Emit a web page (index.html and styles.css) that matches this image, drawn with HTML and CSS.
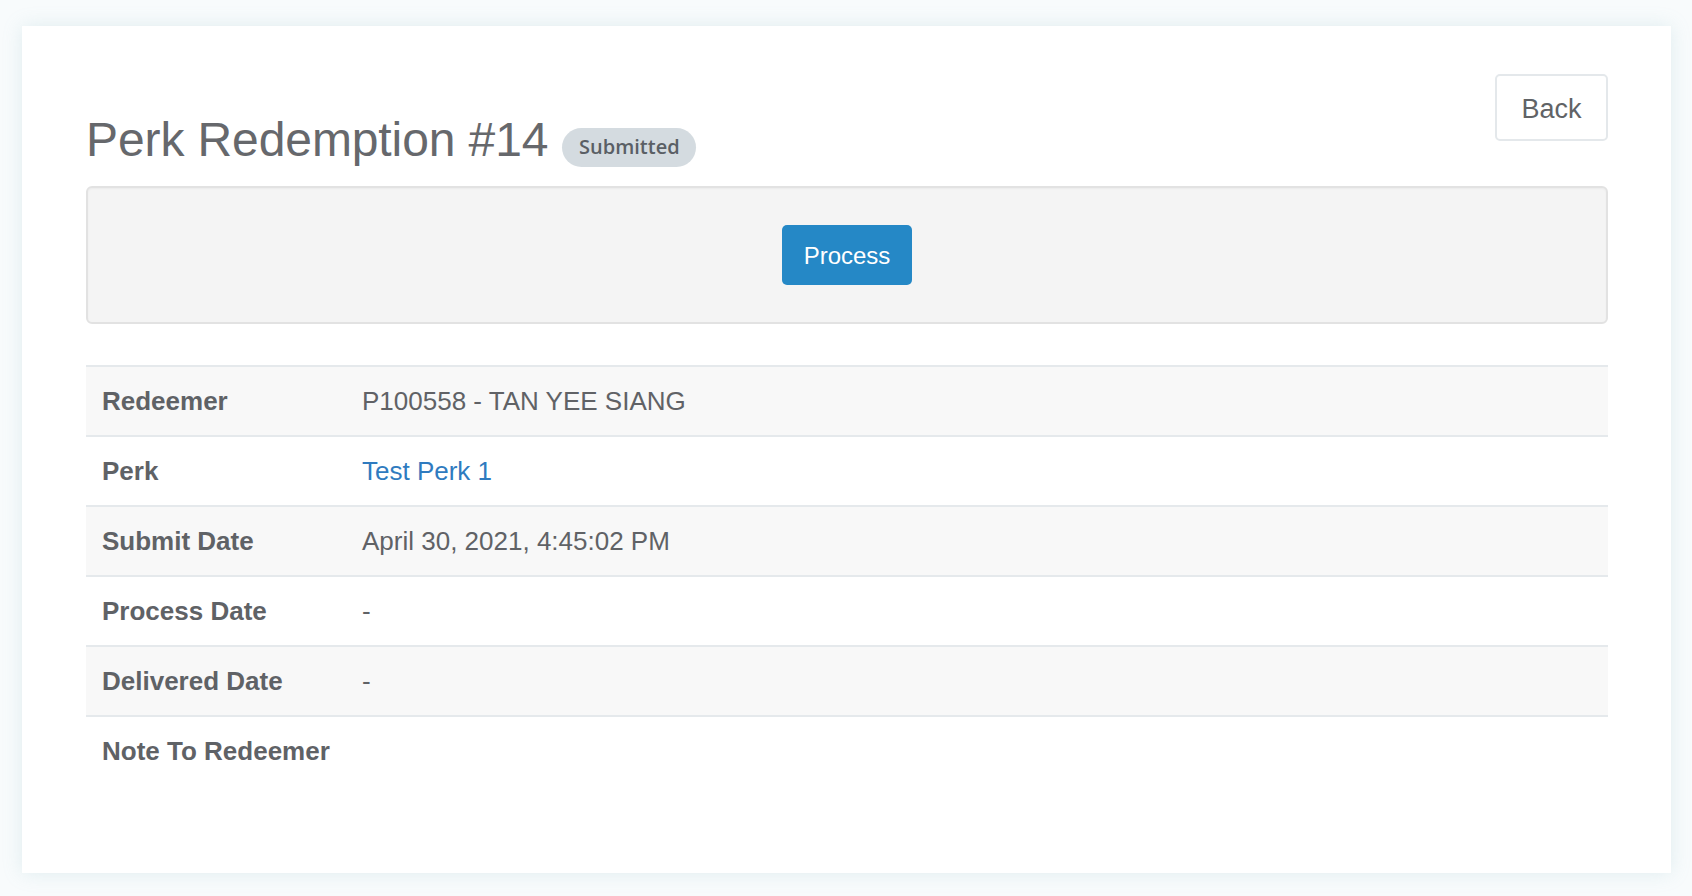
FILE: index.html
```html
<!DOCTYPE html>
<html lang="en">
<head>
<meta charset="utf-8">
<title>Perk Redemption #14</title>
<link rel="stylesheet" href="styles.css">
</head>
<body>
<main class="card">
  <header class="page-header">
    <h1 class="title">
      <span class="title-text">Perk Redemption #14</span>
      <span class="badge">Submitted</span>
    </h1>
    <button class="btn btn-default" type="button">Back</button>
  </header>

  <section class="well">
    <button class="btn btn-primary" type="button">Process</button>
  </section>

  <table class="details">
    <tbody>
      <tr class="striped">
        <th>Redeemer</th>
        <td>P100558 - TAN YEE SIANG</td>
      </tr>
      <tr>
        <th>Perk</th>
        <td><a class="link" href="#">Test Perk 1</a></td>
      </tr>
      <tr class="striped">
        <th>Submit Date</th>
        <td>April 30, 2021, 4:45:02 PM</td>
      </tr>
      <tr>
        <th>Process Date</th>
        <td>-</td>
      </tr>
      <tr class="striped">
        <th>Delivered Date</th>
        <td>-</td>
      </tr>
      <tr class="last">
        <th>Note To Redeemer</th>
        <td></td>
      </tr>
    </tbody>
  </table>
</main>
</body>
</html>
```

FILE: styles.css
```css
* {
  box-sizing: border-box;
}

html, body {
  margin: 0;
  padding: 0;
}

body {
  background: #f8fbfc;
  font-family: "Liberation Sans", Arial, Helvetica, sans-serif;
  color: #636569;
  padding: 26px 21px 23px 22px;
}

.card {
  background: #ffffff;
  box-shadow: 0 0 18px rgba(140, 185, 195, 0.22);
  padding: 48px 63px 86px 64px;
  min-height: 847px;
}

.page-header {
  display: flex;
  justify-content: space-between;
  align-items: flex-start;
}

.title {
  display: flex;
  align-items: flex-end;
  margin: 39px 0 0 0;
  font-size: 48px;
  font-weight: 400;
  line-height: 53px;
  color: #66686c;
  letter-spacing: -0.1px;
}

.badge {
  display: inline-flex;
  align-items: center;
  justify-content: center;
  margin: 0 0 -1px 14px;
  height: 39px;
  width: 134px;
  padding: 0 0 1px 0;
  border-radius: 20px;
  background: #d4dbe0;
  color: #5a5f65;
  font-family: "Open Sans", "Liberation Sans", sans-serif;
  font-size: 20px;
  font-weight: 600;
  line-height: 1;
  letter-spacing: 0;
}

.btn {
  font-family: "Liberation Sans", Arial, sans-serif;
  cursor: pointer;
  border-radius: 5px;
}

.btn-default {
  width: 113px;
  height: 67px;
  background: #ffffff;
  border: 2px solid #e4e8eb;
  color: #616366;
  font-size: 27px;
  padding: 3px 0 0 0;
}

.well {
  margin-top: 20px;
  height: 138px;
  background: #f4f4f4;
  border: 2px solid #e2e2e2;
  border-radius: 6px;
  box-shadow: inset 0 1px 2px rgba(0, 0, 0, 0.04);
  display: flex;
  align-items: center;
  justify-content: center;
}

.btn-primary {
  width: 130px;
  height: 60px;
  background: #2588c6;
  border: none;
  color: #ffffff;
  font-size: 24px;
  padding: 1px 0 0 0;
}

.details {
  margin-top: 41px;
  width: 100%;
  border-collapse: collapse;
}

.details tr {
  height: 70px;
  border-top: 2px solid #e5e9ec;
}

.details tr.striped {
  background: #f8f8f8;
}

.details th,
.details td {
  padding: 0 16px;
  font-size: 26px;
  text-align: left;
  vertical-align: middle;
}

.details th {
  width: 260px;
  font-weight: 700;
  color: #5f6266;
}

.details td {
  font-weight: 400;
  color: #606266;
}

.link {
  color: #2f7bbf;
  text-decoration: none;
}
```
